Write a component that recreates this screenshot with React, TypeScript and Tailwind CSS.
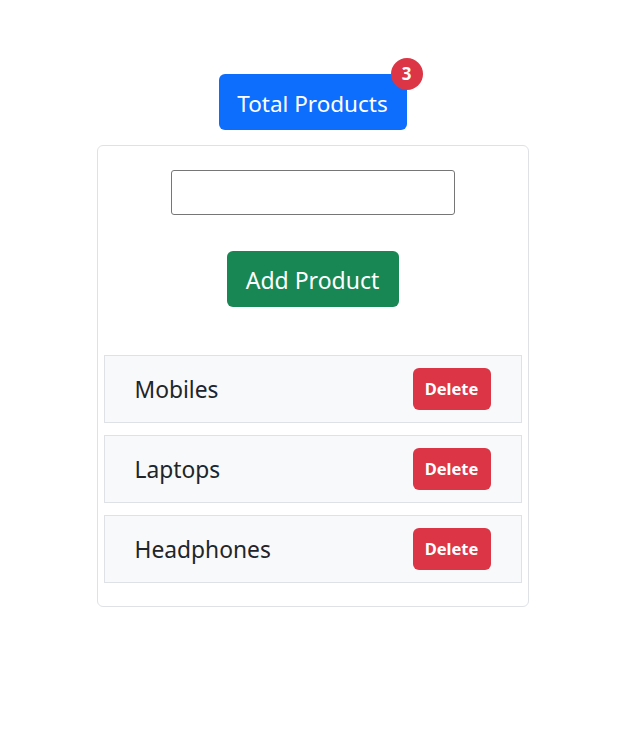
import React, { useState } from 'react';

const PRODUCTS = ['Mobiles', 'Laptops', 'Headphones'];

export default function App() {
  const [items, setItems] = useState<string[]>(PRODUCTS);
  const [name, setName] = useState('');

  return (
    <div className="min-h-screen bg-white text-[#212529]" style={{ fontFamily: '"Noto Sans", "Open Sans", sans-serif' }}>
      <div className="w-[625px] flex flex-col items-center pt-[74px]">
        <div className="relative">
          <button className="h-[56px] w-[188px] rounded-md bg-[#0d6efd] pt-[3px] text-[22.5px] text-white">
            Total Products
          </button>
          <span className="absolute left-full top-0 -translate-x-1/2 -translate-y-1/2 flex h-[32px] w-[32px] items-center justify-center rounded-full bg-[#dc3545] text-[17px] font-bold text-white">
            {items.length}
          </span>
        </div>

        <div className="mt-[15px] w-[432px] rounded-md border border-[#dee2e6] px-[6px] pt-[24px] pb-[23px] flex flex-col items-center">
          <input
            value={name}
            onChange={e => setName(e.target.value)}
            className="h-[45px] w-[284px] rounded-[3px] border border-[#767676] px-2 outline-none"
          />
          <button
            onClick={() => { if (name.trim()) { setItems([...items, name.trim()]); setName(''); } }}
            className="mt-[36px] h-[56px] w-[172px] rounded-md bg-[#198754] pt-[3px] text-[23px] text-white"
          >
            Add Product
          </button>

          <ul className="mt-[48px] w-full flex flex-col gap-[12px]">
            {items.map((item, i) => (
              <li key={i} className="h-[68px] flex items-center justify-between border border-[#dee2e6] bg-[#f8f9fa] pl-[30px] pr-[30px]">
                <span className="pt-[3px] text-[22.8px] text-[#212529]">{item}</span>
                <button
                  onClick={() => setItems(items.filter((_, j) => j !== i))}
                  className="h-[42px] w-[78px] rounded-md bg-[#dc3545] pt-[1px] text-[16.5px] font-bold text-white"
                >
                  Delete
                </button>
              </li>
            ))}
          </ul>
        </div>
      </div>
    </div>
  );
}
